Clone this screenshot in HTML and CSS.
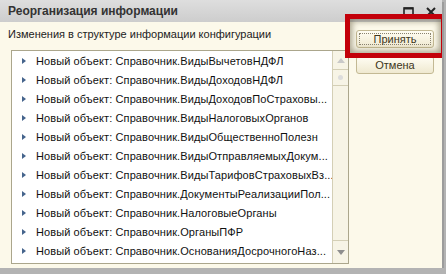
FILE: index.html
```html
<!DOCTYPE html>
<html lang="ru">
<head>
    <meta charset="UTF-8">
    <title>Реорганизация информации</title>
    <link rel="stylesheet" href="styles.css">
</head>
<body>
    <div class="window">
        <div class="titlebar">
            <span class="title">Реорганизация информации</span>
            <div class="controls">
                <svg width="11" height="10" viewBox="0 0 11 10">
                    <rect x="1" y="1" width="9" height="8" fill="none" stroke="#222" stroke-width="1.6"/>
                    <line x1="1" y1="1.5" x2="10" y2="1.5" stroke="#222" stroke-width="2"/>
                </svg>
                <svg width="10" height="10" viewBox="0 0 10 10">
                    <path d="M1 1 L9 9 M9 1 L1 9" stroke="#222" stroke-width="2"/>
                </svg>
            </div>
        </div>

        <div class="content">
            <div class="main">
                <div class="caption">Изменения в структуре информации конфигурации</div>
                <div class="list">
                    <ul class="rows">
                        <li class="row"><span class="arrow"></span><span class="text">Новый объект: Справочник.ВидыВычетовНДФЛ</span></li>
                        <li class="row"><span class="arrow"></span><span class="text">Новый объект: Справочник.ВидыДоходовНДФЛ</span></li>
                        <li class="row"><span class="arrow"></span><span class="text">Новый объект: Справочник.ВидыДоходовПоСтраховы...</span></li>
                        <li class="row"><span class="arrow"></span><span class="text">Новый объект: Справочник.ВидыНалоговыхОрганов</span></li>
                        <li class="row"><span class="arrow"></span><span class="text">Новый объект: Справочник.ВидыОбщественноПолезн</span></li>
                        <li class="row"><span class="arrow"></span><span class="text">Новый объект: Справочник.ВидыОтправляемыхДокум...</span></li>
                        <li class="row"><span class="arrow"></span><span class="text">Новый объект: Справочник.ВидыТарифовСтраховыхВз...</span></li>
                        <li class="row"><span class="arrow"></span><span class="text">Новый объект: Справочник.ДокументыРеализацииПол...</span></li>
                        <li class="row"><span class="arrow"></span><span class="text">Новый объект: Справочник.НалоговыеОрганы</span></li>
                        <li class="row"><span class="arrow"></span><span class="text">Новый объект: Справочник.ОрганыПФР</span></li>
                        <li class="row"><span class="arrow"></span><span class="text">Новый объект: Справочник.ОснованияДосрочногоНаз...</span></li>
                    </ul>
                    <div class="scrollbar">
                        <div class="scroll-btn"><span class="tri-up"></span></div>
                        <div class="thumb"><span class="dot"></span></div>
                        <div class="track"></div>
                        <div class="scroll-btn scroll-btn-down"><span class="tri-down"></span></div>
                    </div>
                </div>
            </div>

            <div class="actions">
                <button class="btn btn-default"><span class="focus">Принять</span></button>
                <button class="btn">Отмена</button>
            </div>
        </div>

        <div class="highlight"></div>
    </div>
</body>
</html>
```

FILE: styles.css
```css
body {
    margin: 0;
    background-color: #b3b3b3;
    font-family: "Liberation Sans", Arial, sans-serif;
    font-size: 11px;
    color: #1a1a1a;
}

.window {
    position: relative;
    width: 442px;
    height: 268px;
    background-color: #fcf9ea;
    box-shadow: 2px 2px 0 #9c9c9c;
    overflow: hidden;
}

.titlebar {
    height: 22px;
    display: flex;
    align-items: center;
    justify-content: space-between;
    padding: 0 6px 0 8px;
    background: linear-gradient(#dedede, #cdcdcd);
}

.title {
    font-weight: bold;
    font-size: 12px;
    color: #333;
}

.controls {
    display: flex;
    gap: 12px;
    align-items: center;
    margin-top: 2px;
}

.controls svg {
    display: block;
}

.content {
    display: flex;
    padding: 6px 0 0 8px;
}

.main {
    width: 341px;
}

.caption {
    line-height: 13px;
    color: #222;
    margin-bottom: 9px;
}

.list {
    display: flex;
    margin-left: 3px;
    height: 212px;
    border: 1px solid #aba68c;
    background-color: #fff;
}

.rows {
    list-style: none;
    margin: 0;
    padding: 0;
    flex: 1;
    min-width: 0;
}

.row {
    height: 19px;
    display: flex;
    align-items: center;
    padding: 0 4px 0 10px;
}

.arrow {
    flex: none;
    width: 0;
    height: 0;
    border-left: 4px solid #45648c;
    border-top: 3px solid transparent;
    border-bottom: 3px solid transparent;
    margin-right: 10px;
}

.text {
    white-space: nowrap;
    color: #111;
    letter-spacing: 0.1px;
}

.scrollbar {
    flex: none;
    width: 15px;
    border-left: 1px solid #d4cfb6;
    background-color: #f7f4e6;
    display: flex;
    flex-direction: column;
}

.scroll-btn {
    height: 18px;
    display: flex;
    align-items: center;
    justify-content: center;
    border-bottom: 1px solid #d4cfb6;
}

.scroll-btn-down {
    height: 22px;
    border-bottom: none;
    border-top: 1px solid #d4cfb6;
}

.tri-up {
    border-bottom: 5px solid #c9c9c9;
    border-left: 4px solid transparent;
    border-right: 4px solid transparent;
}

.tri-down {
    border-top: 5px solid #8e8e8e;
    border-left: 4px solid transparent;
    border-right: 4px solid transparent;
}

.thumb {
    height: 15px;
    display: flex;
    align-items: center;
    justify-content: center;
    border-bottom: 1px solid #d4cfb6;
}

.dot {
    width: 5px;
    height: 5px;
    border-radius: 50%;
    background-color: #dcdcdc;
}

.track {
    flex: 1;
}

.actions {
    display: flex;
    flex-direction: column;
    gap: 8px;
    margin: 2px 0 0 7px;
}

.btn {
    width: 78px;
    height: 18px;
    padding: 0;
    font: inherit;
    color: #3d3620;
    border: 1px solid #c3b993;
    border-radius: 3px;
    background: linear-gradient(#fffdf3, #efe9d0);
    display: flex;
    align-items: center;
    justify-content: center;
}

.btn-default {
    padding: 2px;
}

.focus {
    flex: 1;
    align-self: stretch;
    display: flex;
    align-items: center;
    justify-content: center;
    border: 1px dotted #8a8370;
}

/* annotation frame drawn over the default button */
.highlight {
    position: absolute;
    left: 345px;
    top: 14px;
    width: 91px;
    height: 34px;
    border: 5px solid #c3000a;
    box-shadow: inset 0 0 6px 2px rgba(60, 50, 20, 0.45);
}
```
